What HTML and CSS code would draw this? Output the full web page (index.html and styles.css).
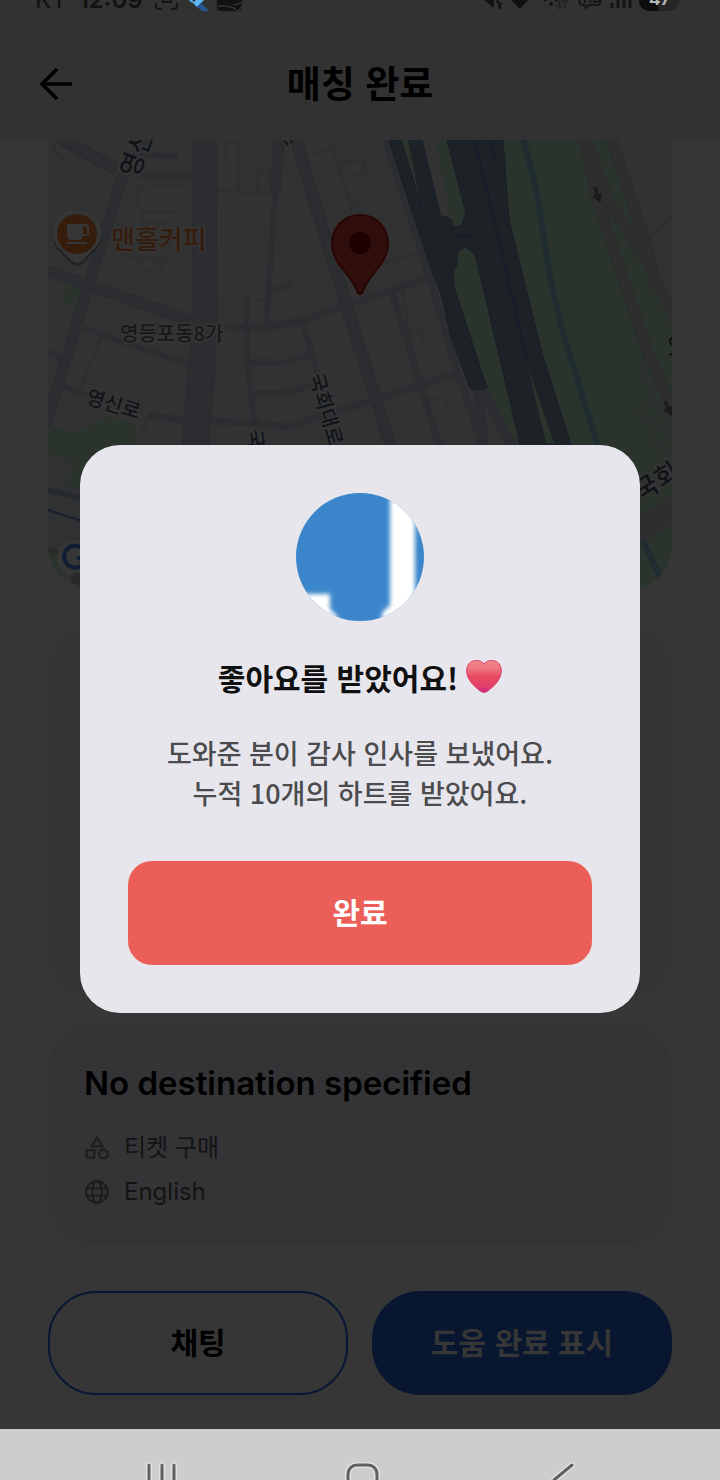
FILE: index.html
```html
<!DOCTYPE html>
<html lang="ko">
<head>
<meta charset="utf-8">
<meta name="viewport" content="width=device-width, initial-scale=1">
<title>매칭 완료</title>
<link rel="stylesheet" href="styles.css">
</head>
<body>
<div class="screen">
  <header class="top">
    <div class="status">
      <span class="carrier">KT</span>
      <span class="clock">12:09</span>
      <svg class="status-left" viewBox="150 0 94 14" width="94" height="14" aria-hidden="true">
        <path d="M155 3v3q0 3 3 3h3M176 3v3q0 3-3 3h-3M162 0v2h8v-2" fill="none" stroke="#151515" stroke-width="2"/>
        <path d="M188 1l2-2 4 4-2 0z" fill="#54b0ee"/>
        <path d="M192 3l8-8h8l-12 12z" fill="#5cb8f5"/>
        <path d="M196 7l4-4 8 8h-7z" fill="#265794"/>
        <rect x="216" y="-10" width="25" height="21" rx="4" fill="#111" stroke="#222"/>
        <path d="M217 6q14-1 20 5M232 5l9-2M238 10l3-4" fill="none" stroke="#414141" stroke-width="1"/>
      </svg>
      <svg class="status-right" viewBox="476 0 206 14" width="206" height="14" aria-hidden="true">
        <path d="M479 0h5l10 8v-8z" fill="#111"/>
        <path d="M499-2l-2 4 4 2-2 2 2 3" fill="none" stroke="#111" stroke-width="2"/>
        <path d="M511 0h17l-8 9z" fill="#111"/>
        <path d="M544 1q7-5 13 0" fill="none" stroke="#141414" stroke-width="2"/>
        <circle cx="551" cy="4" r="2" fill="#111"/>
        <path d="M559 0v8m-3-3 3 3 3-3M565 8v-8m-3 2 3-3 3 3" fill="none" stroke="#242424" stroke-width="2"/>
        <path d="M580-2q-2 6 2 7h3l1 3 3-3h9q3-1 3-7" fill="none" stroke="#161616" stroke-width="2"/>
        <text x="583" y="3" class="hd">HD</text>
        <path d="M612 3v5M618 0v8M624 0v8M630 0v8" stroke="#141414" stroke-width="3"/>
        <rect x="639" y="-14" width="41" height="25" rx="12" fill="#252525"/>
        <path d="M658-14v25h-7q-12 0-12-12z" fill="#0d0d0d"/>
        <text x="649" y="5" class="battery">47</text>
      </svg>
    </div>
    <div class="appbar">
      <button class="back" type="button" aria-label="뒤로">
        <svg viewBox="0 0 34 34" width="34" height="34"><path d="M33 17H3M18 2L3 17l15 15" fill="none" stroke="#000" stroke-width="3.600"/></svg>
      </button>
      <h1 class="page-title">매칭 완료</h1>
    </div>
  </header>

  <main class="content">
    <section class="map" aria-label="지도">
      <svg class="map-art" viewBox="48 140 624 452" preserveAspectRatio="xMidYMid slice">
        <rect x="48" y="140" width="624" height="452" fill="#323232"/>
        <g fill="#2b342c">
          <path d="M400 140H612L648 250 657 290 672 325V592H500L512 443 485 385 455 290z"/>
          <path d="M48 425l27 8 32-16 29 6-3 30V500H48z"/>
          <path d="M68 283l13 5-5 20-15-5z"/>
          <path d="M48 548l11 4 3 40H48z"/>
        </g>
        <path d="M48 453l27 8-8 31-19-5zM48 488h34v66l-34-10z" fill="#303133"/>
        <g class="alley">
          <path d="M55 143l-2 7 12 10M150 186l-12 2-2 17 7 7h32M143 212v11h24M153 186h30M164 180v6M123 257l52 2M139 258v9l14 7M160 259v18"/>
          <path d="M217 191l53 2M238 141v50M226 160v-17h12M257 191l2-23 10 1v16M102 337l-22 51M147 418l-4 14"/>
          <path d="M314 155l19-6M332 142l6 23 14 48M338 165l25-6 4 18M346 178l21-6M355 198l6 17M378 220l10-2M383 263l34-9M388 242l6 16M403 290l5 37 6 18M408 330l12-2 5 18M428 399l15-2 6 16M349 350l6-2M274 253l6-1M257 299l8 1M249 358l20 0 7-4"/>
        </g>
        <g class="road-edge">
          <path d="M60 138l57 32" stroke-width="12"/>
          <path d="M150 140l-28 38-34 109-42 138" stroke-width="11"/>
          <path d="M48 271l40 14 104 36" stroke-width="11"/>
          <path d="M279 140l-4 53" stroke-width="11"/>
          <path d="M297 141l11 39 39 127 44 140" stroke-width="12"/>
          <path d="M48 490l34 8M48 549l34 10" stroke-width="5"/>
        </g>
        <g class="road">
          <path d="M140 175l52 2M83 327l34 13 73 24M48 352l15 8M63 387l24 8M147 155l31 1" stroke-width="6"/>
          <path d="M147 416l38 4M208 421l45 2 35 4 85-27 84-27" stroke-width="7"/>
          <path d="M275 193l-9 134M247 297v66l8 60M248 363h34l26-8M250 393h35l32-9M302 321l18 62M271 291l22-8" stroke-width="6"/>
          <path d="M225 327h42l35-6 45-16 83-28" stroke-width="7"/>
          <path d="M392 292l28 91 20 64M385 140l37 113 35 117 27 80" stroke-width="7"/>
          <path d="M478 388l6 60M482 387l30 60" stroke-width="10"/>
          <path d="M60 138l57 32M150 140l-28 38-34 109-42 138M48 271l40 14 104 36M279 140l-4 53M297 141l11 39 39 127 44 140" stroke-width="10"/>
        </g>
        <path d="M192 140h24l1 180-3 60-6 70h-26l6-80 5-53z" fill="#2b2d30" stroke="#282b2d"/>
        <path d="M423 140h12l18 86-8-8h-5z" fill="#323232"/>
        <g fill="#1d2226" stroke="#181e2a" stroke-width="1">
          <path d="M389 140h13l20 70-15-70h15l19 78q4-4 10 1l2 8 8-1 5-13-19-73h56l6 80 33 133 30 95H521L475 254l-10-7-8 6v11l-4 9 1 14 33 101-5 2-8 0-4-2-19-50-10-44-10-25-20-60z"/>
        </g>
        <path d="M528 367l18 76h8z" fill="#2b342c"/>
        <path d="M402 140h6l12 60z" fill="#2b342c"/>
        <path d="M475 141l28 116 24 103M491 142l4 22M453 237l8 0 12-3" fill="none" stroke="#181d2b" stroke-width="2"/>
        <path d="M523 138l14 55 13 84 12 53 35 113 64 136" fill="none" stroke="#1f2c30" stroke-width="6"/>
        <g class="ramp-edge">
          <path d="M584 138l14 64 49 148 28 65" stroke-width="11"/>
          <path d="M587 142l21 58 40 63 27 57M611 138l37 112 9 40" stroke-width="11"/>
        </g>
        <g class="ramp">
          <path d="M584 138l14 64 49 148 28 65M587 142l21 58 40 63 27 57M611 138l37 112 9 40" stroke-width="10"/>
          <path d="M648 237l24-19M643 358v15l29 64M636 412l16-7M642 423l16-7M647 434l17-7M653 446l19-8M659 457l13-5" stroke-width="3"/>
          <path d="M590 560l90-55" stroke-width="24"/>
        </g>
        <path d="M595 187l3 10M665 401l4 9" stroke="#1a1a1d" stroke-width="3"/>
        <path d="M592 196l10-3-2 10zM663 410l9-5v11z" fill="#1a1a1d"/>
        <path d="M48 510l34 11" stroke="#17202c" stroke-width="2"/>

        <g class="map-label">
          <text class="street large" transform="translate(137 179) rotate(-70)">영신로</text>
          <text class="street" transform="translate(85 403) rotate(17)">영신로</text>
          <text class="street" transform="translate(309 376) rotate(74)">국회대로</text>
          <text class="street" transform="translate(247 431) rotate(82)">국회대로</text>
          <text class="street large" transform="translate(641 502) rotate(-32)">국회대로</text>
          <text class="district" x="120" y="341">영등포동8가</text>
          <text class="cafe" x="111" y="249">맨홀커피</text>
        </g>
        <path d="M285 141l3 4M291 140l1 3M672 337q-4 4 0 8M669 355l3-1" stroke="#111" stroke-width="2" fill="none"/>

        <path d="M77 213a24 24 0 0 0-24 24q0 9 7 15l12 12q5 4 10 0l12-12q7-6 7-15a24 24 0 0 0-24-24z" fill="#1d1d1d" opacity=".7"/>
        <path d="M77 210a24 24 0 0 0-24 24q0 9 7 15l12 12q5 4 10 0l12-12q7-6 7-15a24 24 0 0 0-24-24z" fill="#363636"/>
        <circle cx="77" cy="234" r="20" fill="#351c0b"/>
        <path d="M67 224h16v11q0 5-5 5h-6q-5 0-5-5zM67 242h20v2H67z" fill="#363636"/>
        <rect x="82" y="225" width="6" height="10" rx="2" fill="none" stroke="#363636" stroke-width="2"/>
        <path d="M360 215a28 28 0 0 0-28 28c0 8 2 14 7 21 8 11 14 16 18 27 1 4 5 4 6 0 4-11 10-16 18-27 5-7 7-13 7-21a28 28 0 0 0-28-28z" fill="#300e0c" stroke="#280504" stroke-width="2"/>
        <circle cx="360" cy="243" r="11" fill="#1d0103"/>
        <circle cx="75" cy="558" r="18" fill="#363636"/>
        <path d="M70 577l6-5 8 3v12l-12-4z" fill="#29292b"/>
        <path d="M83 549a11 11 0 1 0 3 9h-9" fill="none" stroke="#101b34" stroke-width="4"/>
      </svg>
    </section>

    <section class="card card-blank"></section>

    <section class="card trip">
      <h2 class="trip-title">No destination specified</h2>
      <ul class="facts">
        <li class="fact">
          <svg viewBox="0 0 24 24" width="26" height="26" aria-hidden="true"><path d="M12 2.500L7 10.500h10zM2.500 14h7v7h-7z" fill="none" stroke="#1e1e1f" stroke-width="2"/><circle cx="18" cy="17.500" r="4" fill="none" stroke="#1e1e1f" stroke-width="2"/></svg>
          <span>티켓 구매</span>
        </li>
        <li class="fact">
          <svg viewBox="0 0 24 24" width="26" height="26" aria-hidden="true"><g fill="none" stroke="#1c1c1d" stroke-width="1.800"><circle cx="12" cy="12" r="10"/><ellipse cx="12" cy="12" rx="4.500" ry="10"/><path d="M3 8.500h18M3 15.500h18"/></g></svg>
          <span>English</span>
        </li>
      </ul>
    </section>

    <div class="actions">
      <button class="action outline" type="button">채팅</button>
      <button class="action filled" type="button">도움 완료 표시</button>
    </div>
  </main>

  <nav class="navbar" aria-label="시스템 탐색">
    <button class="nav-key" type="button" aria-label="최근 앱"><svg viewBox="0 0 40 18" width="40" height="18"><g class="halo"><path d="M9 3v20M22 3v20M34 3v20"/></g><g class="stroke"><path d="M9 3v20M22 3v20M34 3v20"/></g></svg></button>
    <button class="nav-key" type="button" aria-label="홈"><svg viewBox="0 0 40 18" width="40" height="18"><rect class="halo" x="8" y="3" width="29" height="29" rx="9"/><rect class="stroke" x="8" y="3" width="29" height="29" rx="9"/></svg></button>
    <button class="nav-key" type="button" aria-label="뒤로 가기"><svg viewBox="0 0 40 18" width="40" height="18"><path class="halo" d="M32 3L14 18"/><path class="stroke" d="M32 3L14 18"/></svg></button>
  </nav>
</div>

<div class="overlay">
  <div class="dialog" role="dialog" aria-modal="true" aria-labelledby="dialog-title">
    <svg class="avatar" viewBox="0 0 128 128" width="128" height="128" aria-hidden="true">
      <defs>
        <clipPath id="disc"><circle cx="64" cy="64" r="64"/></clipPath>
        <filter id="soft" x="-20%" y="-20%" width="140%" height="140%"><feGaussianBlur stdDeviation="2"/></filter>
      </defs>
      <g clip-path="url(#disc)">
        <rect width="128" height="128" fill="#3b86ca"/>
        <path d="M94-10H119V140H86V120l8-8zM-10 101H34V116l7 7v17H-10z" fill="#fff" filter="url(#soft)"/>
      </g>
    </svg>
    <h2 class="dialog-title" id="dialog-title">좋아요를 받았어요!
      <svg class="heart" viewBox="0 0 36 34" width="36" height="34" role="img" aria-label="하트">
        <defs>
          <linearGradient id="love" x1="0" y1="0" x2="0" y2="1"><stop offset="0" stop-color="#f08a8c"/><stop offset=".25" stop-color="#ef7580"/><stop offset=".5" stop-color="#e84a62"/><stop offset=".8" stop-color="#e13f68"/><stop offset="1" stop-color="#cd2598"/></linearGradient>
        </defs>
        <path d="M18 4C15 0 11 .7 9 .7 4 1 .7 5 .7 11 .7 20 9 27 15 31.500q3 2 6 0C27 27 35.300 20 35.300 11 35.300 5 32 1 27 .7 25 .7 21 0 18 4z" fill="url(#love)" stroke="#de3c65" stroke-width="1"/>
      </svg>
    </h2>
    <p class="dialog-text">도와준 분이 감사 인사를 보냈어요.<br>누적 10개의 하트를 받았어요.</p>
    <button class="confirm" type="button">완료</button>
  </div>
</div>
</body>
</html>
```
FILE: styles.css
```css
* {
  box-sizing: border-box;
}

body {
  margin: 0;
  background: #363636;
  color: #000;
  font-family: "Noto Sans CJK KR", "Noto Sans", sans-serif;
}

button {
  margin: 0;
  padding: 0;
  border: 0;
  background: none;
  color: inherit;
  font: inherit;
}

h1,
h2,
p,
ul {
  margin: 0;
  padding: 0;
}

svg {
  display: block;
  flex: none;
}

.screen {
  display: flex;
  flex-direction: column;
  min-height: 100vh;
  overflow: hidden;
}

.top {
  background: #323232;
}

.status {
  display: flex;
  align-items: flex-start;
  height: 28px;
  padding: 0 38px 0 35px;
  color: #111;
  font-family: Inter, sans-serif;
  font-size: 24px;
  line-height: 32px;
  overflow: hidden;
}

.carrier,
.clock {
  margin-top: -16px;
}

.carrier {
  margin-right: 12px;
}

.clock {
  font-weight: 600;
}

.status-left {
  margin-left: 8px;
}

.status-right {
  margin-left: auto;
}

.hd {
  font: 700 12px Inter, sans-serif;
  fill: #151515;
}

.battery {
  font: 700 17px Inter, sans-serif;
  fill: #b5b5b5;
}

.appbar {
  display: grid;
  grid-template-columns: 64px 1fr 64px;
  align-items: center;
  height: 112px;
  padding: 0 24px;
}

.back {
  display: flex;
  justify-content: center;
}

.page-title {
  padding-bottom: 4px;
  font-size: 37px;
  font-weight: 700;
  line-height: 48px;
  text-align: center;
}

.content {
  display: flex;
  flex-direction: column;
  flex: 1;
  padding: 0 48px 34px;
}

.map {
  height: 452px;
  border-radius: 0 0 48px 48px;
  overflow: hidden;
}

.map-art {
  width: 100%;
  height: 100%;
}

.alley,
.road,
.road-edge,
.ramp,
.ramp-edge {
  fill: none;
  stroke-linejoin: round;
}

.alley {
  stroke: #2d2f30;
  stroke-width: 3px;
}

.road {
  stroke: #2b2d30;
}

.road-edge {
  stroke: #272a2d;
}

.ramp {
  stroke: #2e2e30;
}

.ramp-edge {
  stroke: #29292b;
}

.map-label {
  font-weight: 500;
  stroke: #343434;
  stroke-width: 4px;
  stroke-linejoin: round;
  paint-order: stroke;
}

.street {
  font-size: 20px;
  fill: #101318;
}

.large {
  font-size: 26px;
}

.district {
  font-size: 20px;
  fill: #181818;
}

.cafe {
  font-size: 26px;
  fill: #351c0c;
}

.card {
  border-radius: 48px;
  background: #343436;
}

.card-blank {
  height: 368px;
  margin-top: 36px;
}

.trip {
  margin-top: 28px;
  padding: 36px;
}

.trip-title {
  font-family: Inter, sans-serif;
  font-size: 33px;
  font-weight: 600;
  line-height: 46px;
}

.facts {
  display: grid;
  gap: 12px;
  margin-top: 26px;
  list-style: none;
}

.fact {
  display: flex;
  align-items: center;
  gap: 14px;
  height: 32px;
  color: #131314;
  font-family: Inter, "Noto Sans CJK KR", sans-serif;
  font-size: 24px;
  line-height: 32px;
}

.actions {
  display: grid;
  grid-template-columns: 1fr 1fr;
  gap: 24px;
  margin-top: 47px;
}

.action {
  height: 104px;
  padding-bottom: 4px;
  border-radius: 48px;
  font-size: 30px;
  font-weight: 700;
}

.outline {
  border: 2px solid #081733;
}

.filled {
  background: #081630;
  color: #363636;
}

.navbar {
  display: flex;
  justify-content: space-around;
  height: 51px;
  padding: 33px 60px 0;
  background: #cdcdcd;
}

.nav-key {
  display: flex;
}

.halo,
.stroke {
  fill: none;
  stroke-linecap: round;
}

.halo {
  stroke: #e2e2e2;
  stroke-width: 6px;
}

.stroke {
  stroke: #606060;
  stroke-width: 3px;
}

.overlay {
  position: fixed;
  inset: 0;
  display: flex;
  align-items: center;
  padding: 0 80px 22px;
}

.dialog {
  display: flex;
  flex: 1;
  flex-direction: column;
  align-items: center;
  padding: 48px;
  border-radius: 40px;
  background: #e7e6ed;
}

.dialog-title {
  display: flex;
  align-items: center;
  gap: 8px;
  margin-top: 34px;
  color: #101010;
  font-size: 30px;
  font-weight: 700;
  line-height: 44px;
}

.dialog-text {
  margin-top: 34px;
  color: #4b4b4d;
  font-size: 27px;
  font-weight: 500;
  line-height: 40px;
  text-align: center;
}

.confirm {
  width: 100%;
  height: 104px;
  margin-top: 48px;
  padding-bottom: 4px;
  border-radius: 24px;
  background: #ec5e58;
  color: #fff;
  font-size: 30px;
  font-weight: 700;
}
```
